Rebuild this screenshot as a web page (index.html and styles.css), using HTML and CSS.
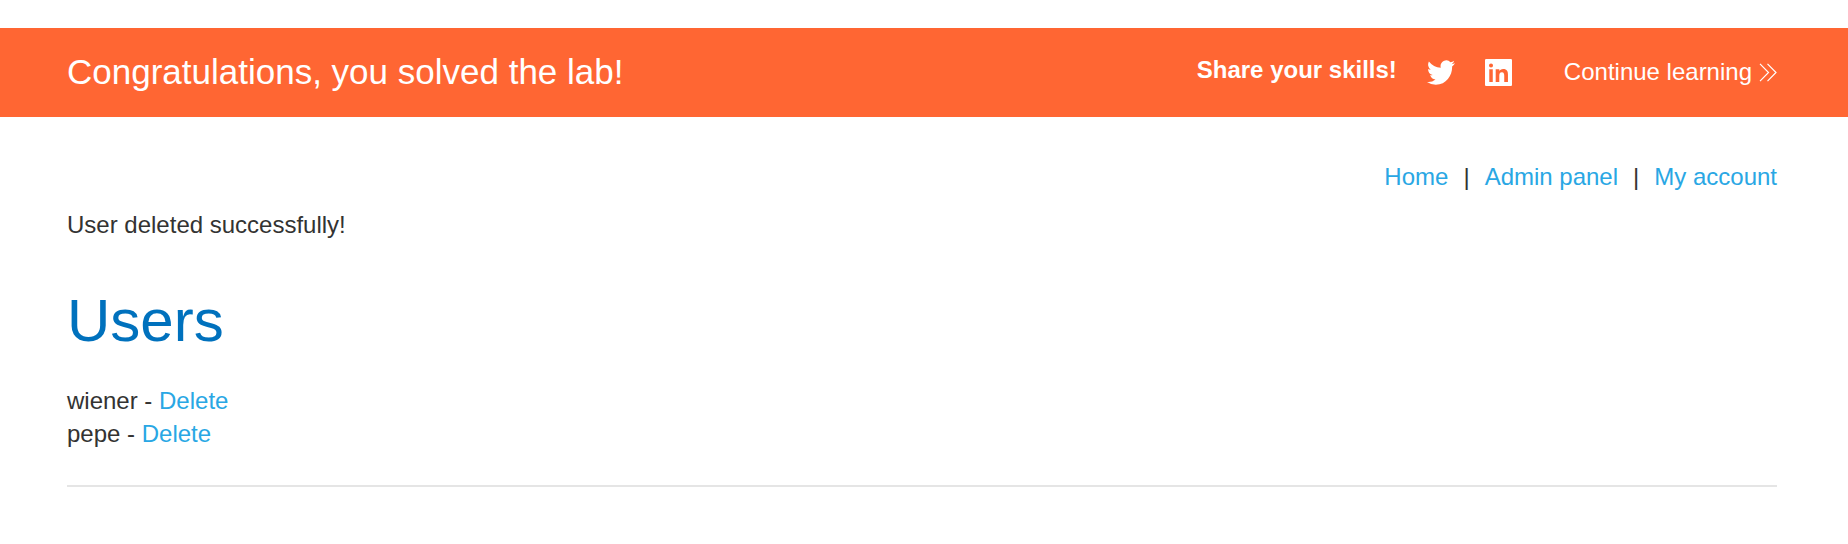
FILE: index.html
```html
<!DOCTYPE html>
<html lang="en">
<head>
<meta charset="utf-8">
<meta name="viewport" content="width=device-width, initial-scale=1">
<title>Users</title>
<link rel="stylesheet" href="styles.css">
</head>
<body>
<header class="banner">
  <h4 class="banner-title">Congratulations, you solved the lab!</h4>
  <div class="banner-actions">
    <span class="share-label">Share your skills!</span>
    <div class="share-links">
      <a class="share-link" href="#" aria-label="Share on Twitter">
        <svg width="28" height="25" viewBox="0 2 24 20" preserveAspectRatio="none" fill="currentColor" aria-hidden="true"><path d="M23.95 4.57a10 10 0 0 1-2.82.77 4.96 4.96 0 0 0 2.16-2.72c-.95.55-2 .95-3.13 1.18a4.92 4.92 0 0 0-8.38 4.48C7.69 8.1 4.07 6.13 1.64 3.16a4.92 4.92 0 0 0 1.52 6.57 4.9 4.9 0 0 1-2.23-.61v.06a4.92 4.92 0 0 0 3.95 4.83 5 5 0 0 1-2.21.08 4.94 4.94 0 0 0 4.6 3.42A9.87 9.87 0 0 1 0 19.54a13.99 13.99 0 0 0 7.55 2.21c9.05 0 14-7.5 14-13.98 0-.21 0-.42-.02-.63a9.94 9.94 0 0 0 2.46-2.55z"/></svg>
      </a>
      <a class="share-link" href="#" aria-label="Share on LinkedIn">
        <svg width="27" height="27" viewBox="0 0 24 24" fill="currentColor" aria-hidden="true"><path fill-rule="evenodd" d="M1 0h22a1 1 0 0 1 1 1v22a1 1 0 0 1-1 1H1a1 1 0 0 1-1-1V1a1 1 0 0 1 1-1zM3.8 9v11.4h3.1V9zM5.35 3.9a1.8 1.8 0 1 0 0 3.6 1.8 1.8 0 0 0 0-3.6zM9.5 9v11.4h3.2v-5.6c0-1.6.4-3.1 2.3-3.1s2.1 1.8 2.1 3.2v5.5h3.3v-6.3c0-3.1-.7-5.3-4.3-5.3-1.7 0-2.9.9-3.4 1.8V9z"/></svg>
      </a>
    </div>
    <a class="continue" href="#"><span class="continue-label">Continue learning</span>
      <svg width="18" height="19" viewBox="0 0 18 19" fill="none" stroke="currentColor" stroke-width="1.2" aria-hidden="true"><path d="M1 .8l8.5 8.7L1 18.2M8.5 .8L17 9.5l-8.5 8.7"/></svg>
    </a>
  </div>
</header>
<main class="page">
  <nav class="nav">
    <a class="link" href="#">Home</a><span>|</span>
    <a class="link" href="#">Admin panel</a><span>|</span>
    <a class="link" href="#">My account</a>
  </nav>
  <p class="message">User deleted successfully!</p>
  <section class="users">
    <h1 class="users-title">Users</h1>
    <div>wiener - <a class="link" href="#">Delete</a></div>
    <div>pepe - <a class="link" href="#">Delete</a></div>
  </section>
  <hr class="divider">
</main>
</body>
</html>
```
FILE: styles.css
```css
body {
  margin: 0;
  padding-top: 28px;
  background: #fff;
  color: #333332;
  font-family: "Liberation Sans", Arial, sans-serif;
  font-size: 24px;
  line-height: 33px;
}

.banner {
  display: flex;
  align-items: center;
  justify-content: space-between;
  padding: 19px 71px 19px 67px;
  background: #ff6633;
  color: #fff;
}

.banner-title {
  margin: 0;
  padding-bottom: 2px;
  font-size: 35px;
  font-weight: 400;
  line-height: 49px;
}

.banner-actions {
  display: flex;
  align-items: center;
}

.share-label {
  padding-bottom: 6px;
  font-weight: 700;
}

.share-links {
  display: flex;
  align-items: center;
  gap: 30px;
  margin: 0 52px 0 30px;
}

.share-link {
  display: flex;
  color: inherit;
}

.continue {
  display: flex;
  align-items: center;
  gap: 7px;
  color: inherit;
  text-decoration: none;
}

.continue-label {
  padding-bottom: 2px;
}

.page {
  padding: 43px 71px 56px 67px;
}

.nav {
  display: flex;
  justify-content: flex-end;
  gap: 15px;
}

.link {
  color: #29a7e4;
  text-decoration: none;
}

.message {
  margin: 15px 0 44px;
}

.users-title {
  margin: 0 0 27px;
  color: #0071bd;
  font-size: 60px;
  font-weight: 400;
  line-height: 72px;
}

.divider {
  height: 2px;
  margin: 35px 0 0;
  border: 0;
  background: #e5e5e5;
}
```
